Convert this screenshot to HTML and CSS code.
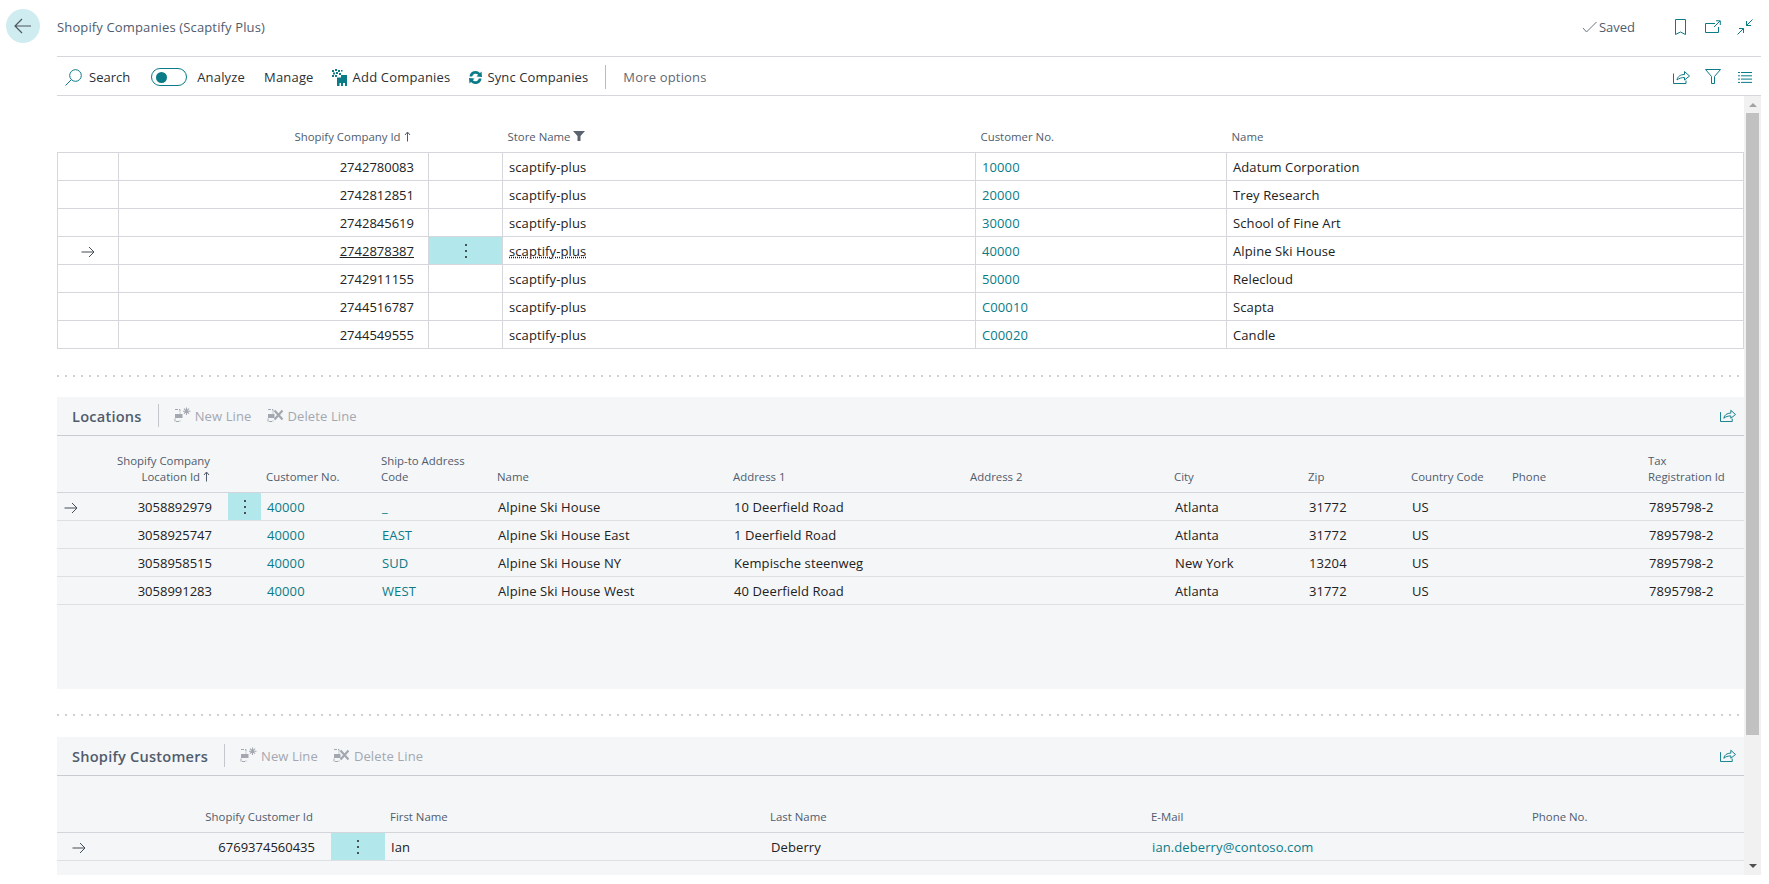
FILE: index.html
```html
<!DOCTYPE html>
<html lang="en">
<head>
<meta charset="utf-8">
<title>Shopify Companies</title>
<link rel="stylesheet" href="styles.css">
</head>
<body>
<svg class="defs" aria-hidden="true">
  <symbol id="arrow" viewBox="0 0 14 12"><path d="M0.5 6H13M8 1l5 5-5 5" fill="none" stroke="#444c56" stroke-width="1"/></symbol>
  <symbol id="up" viewBox="0 0 7 11"><path d="M3.5 10.5V1.5M1 4l2.5-3L6 4" fill="none" stroke="#505c6d" stroke-width="1"/></symbol>
  <symbol id="dots" viewBox="0 0 4 16"><circle cx="2" cy="2" r="1" fill="#212121"/><circle cx="2" cy="8" r="1" fill="#212121"/><circle cx="2" cy="14" r="1" fill="#212121"/></symbol>
  <symbol id="share" viewBox="0 0 17 16"><path d="M.5 5.500v10h12.500v-3M4 12c.5-3.500 3.500-5.500 7.500-5.500V3.500l5 4.500-5 4V9.500c-3 0-5.500.8-7.500 2.500z" fill="none" stroke="#0a7b87" stroke-width="1"/></symbol>
  <symbol id="newline" viewBox="0 0 17 17"><path d="M1 2.500h5v4M1 11.500v3h5v-1" fill="none" stroke="#a3a8b0" stroke-width="1" stroke-dasharray="3 1"/><rect x="1" y="7" width="7.500" height="4" fill="#a3a8b0"/><path d="M12.500 0.500v7.500M9 4.200h7.500M10 1.700l5 5M15 1.700l-5 5" stroke="#a3a8b0" stroke-width="1.100"/></symbol>
  <symbol id="delline" viewBox="0 0 17 17"><path d="M1 2.500h5v4M1 11.500v3h5v-1" fill="none" stroke="#a3a8b0" stroke-width="1" stroke-dasharray="3 1"/><rect x="1" y="7" width="6.500" height="4" fill="#a3a8b0"/><path d="M7.500 3.500l8 9M15.500 3.500l-8 9" stroke="#a3a8b0" stroke-width="2.200"/></symbol>
</svg>
<div class="shell">
  <div class="rail">
    <button class="back" aria-label="Back">
      <svg class="back-ico" viewBox="0 0 18 16"><path d="M1 8h16M8 1 1 8l7 7" fill="none" stroke="#4c5660" stroke-width="1.200"/></svg>
    </button>
  </div>
  <div class="main">
    <header class="head">
      <h1 class="title">Shopify Companies (Scaptify Plus)</h1>
      <div class="head-right">
        <span class="saved"><svg class="check" viewBox="0 0 15 12"><path d="M1 7l3.500 4L14.500 1" fill="none" stroke="#6a7480" stroke-width="1"/></svg>Saved</span>
        <svg class="ico-book" viewBox="0 0 11 16"><path d="M.5.500h10v15l-5-2.500-5 2.500z" fill="none" stroke="#0a7b87" stroke-width="1"/></svg>
        <svg class="ico-open" viewBox="0 0 16 13"><path d="M10 3.500H.5v9h13V7M9 7l6-6M11 .800h4.300V5" fill="none" stroke="#0a7b87" stroke-width="1"/></svg>
        <svg class="ico-coll" viewBox="0 0 16 16"><path d="M15.500.500 9.500 6.500M9.500 2v4.500H14M.5 15.500l6-6M6.500 14V9.500H2" fill="none" stroke="#0a7b87" stroke-width="1"/></svg>
      </div>
    </header>
    <nav class="bar">
      <span class="act act-search">
        <svg class="ico-search" viewBox="0 0 17 17"><circle cx="10.500" cy="6.500" r="5.800" fill="none" stroke="#0a7b87" stroke-width="1"/><path d="M6.300 10.700.5 16.500" stroke="#0a7b87" stroke-width="1"/></svg>Search
      </span>
      <span class="toggle"><span class="knob"></span></span>
      <span class="act act-analyze">Analyze</span>
      <span class="act act-manage">Manage</span>
      <span class="act act-add">
        <svg class="ico-add" viewBox="0 0 15 17"><path d="M0 1h2v2H0zM3 0h2v2H3zM6 1h2v2H6zM1 3.500h2v2H1zM4 3h2v2H4zM7 4h2v2H7zM0 6h2v2H0zM3 6h2v2H3zM9 1h1.500v1.500H9z" fill="#0a7b87"/><path d="M5 8.500h4V6h6v11h-2v-3h-2v3H9v-3H7.500v3H5z" fill="#0a7b87"/></svg>Add Companies
      </span>
      <span class="act act-sync">
        <svg class="ico-sync" viewBox="0 0 15 15"><path d="M1.500 6.500A6 6 0 0 1 12 3l1.500-1.500.5 5.500-5.500-.5 1.700-1.700A3.500 3.500 0 0 0 4.200 6.500zM13.500 8.500A6 6 0 0 1 3 12l-1.500 1.500L1 8l5.500.5-1.700 1.700a3.500 3.500 0 0 0 6-1.700z" fill="#0a7b87"/></svg>Sync Companies
      </span>
      <span class="bar-sep"></span>
      <span class="more">More options</span>
      <span class="bar-right">
        <svg class="ico-share bar-share"><use href="#share"/></svg>
        <svg class="ico-filter" viewBox="0 0 16 15"><path d="M.5.500h15L9.500 7.500v7h-3v-7z" fill="none" stroke="#0a7b87" stroke-width="1"/></svg>
        <svg class="ico-list" viewBox="0 0 14 11"><path d="M0 .5h2M3 .5h11M0 3.800h2M3 3.800h11M0 7.100h2M3 7.100h11M0 10.400h2M3 10.400h11" stroke="#0a7b87" stroke-width="1"/></svg>
      </span>
    </nav>
    <div class="body">
      <div class="scroll">
        <table class="grid boxed t-comp">
          <colgroup><col class="c61"><col class="c310"><col class="c74"><col class="c473"><col class="c251"><col class="c517"></colgroup>
          <thead><tr>
            <th></th><th class="num">Shopify Company Id <svg class="up"><use href="#up"/></svg></th><th></th>
            <th>Store Name <svg class="fun" viewBox="0 0 12 10"><path d="M0 0h12L7.500 5v5h-3V5z" fill="#5a6470"/></svg></th>
            <th>Customer No.</th><th>Name</th>
          </tr></thead>
          <tbody>
            <tr><td></td><td class="num">2742780083</td><td></td><td>scaptify-plus</td><td class="lnk">10000</td><td>Adatum Corporation</td></tr>
            <tr><td></td><td class="num">2742812851</td><td></td><td>scaptify-plus</td><td class="lnk">20000</td><td>Trey Research</td></tr>
            <tr><td></td><td class="num">2742845619</td><td></td><td>scaptify-plus</td><td class="lnk">30000</td><td>School of Fine Art</td></tr>
            <tr><td class="arr arr-comp"><svg class="arrow"><use href="#arrow"/></svg></td><td class="num"><span class="und">2742878387</span></td><td class="menu"><svg class="dots"><use href="#dots"/></svg></td><td><span class="dot-und">scaptify-plus</span></td><td class="lnk">40000</td><td>Alpine Ski House</td></tr>
            <tr><td></td><td class="num">2742911155</td><td></td><td>scaptify-plus</td><td class="lnk">50000</td><td>Relecloud</td></tr>
            <tr><td></td><td class="num">2744516787</td><td></td><td>scaptify-plus</td><td class="lnk">C00010</td><td>Scapta</td></tr>
            <tr><td></td><td class="num">2744549555</td><td></td><td>scaptify-plus</td><td class="lnk">C00020</td><td>Candle</td></tr>
          </tbody>
        </table>
        <div class="dotted"></div>
        <section class="panel panel-loc">
          <div class="pbar">
            <h2 class="ptitle">Locations</h2><span class="psep"></span>
            <span class="pact"><svg class="pico"><use href="#newline"/></svg>New Line</span>
            <span class="pact"><svg class="pico"><use href="#delline"/></svg>Delete Line</span>
            <svg class="ico-share pshare"><use href="#share"/></svg>
          </div>
          <table class="grid t-loc">
            <colgroup><col class="c43"><col class="c128"><col class="c33"><col class="c115"><col class="c116"><col class="c236"><col class="c237"><col class="c204"><col class="c134"><col class="c103"><col class="c101"><col class="c136"><col class="c101"></colgroup>
            <thead><tr>
              <th></th><th class="num num-h">Shopify Company<br>Location Id <svg class="up"><use href="#up"/></svg></th><th></th>
              <th>Customer No.</th><th>Ship-to Address<br>Code</th><th>Name</th><th>Address 1</th><th>Address 2</th><th>City</th><th>Zip</th><th>Country Code</th><th>Phone</th><th>Tax<br>Registration Id</th>
            </tr></thead>
            <tbody>
              <tr><td class="arr arr-loc"><svg class="arrow"><use href="#arrow"/></svg></td><td class="num">3058892979</td><td class="menu"><svg class="dots"><use href="#dots"/></svg></td><td class="lnk">40000</td><td class="lnk">_</td><td>Alpine Ski House</td><td>10 Deerfield Road</td><td></td><td>Atlanta</td><td>31772</td><td>US</td><td></td><td>7895798-2</td></tr>
              <tr><td></td><td class="num">3058925747</td><td></td><td class="lnk">40000</td><td class="lnk">EAST</td><td>Alpine Ski House East</td><td>1 Deerfield Road</td><td></td><td>Atlanta</td><td>31772</td><td>US</td><td></td><td>7895798-2</td></tr>
              <tr><td></td><td class="num">3058958515</td><td></td><td class="lnk">40000</td><td class="lnk">SUD</td><td>Alpine Ski House NY</td><td>Kempische steenweg</td><td></td><td>New York</td><td>13204</td><td>US</td><td></td><td>7895798-2</td></tr>
              <tr><td></td><td class="num">3058991283</td><td></td><td class="lnk">40000</td><td class="lnk">WEST</td><td>Alpine Ski House West</td><td>40 Deerfield Road</td><td></td><td>Atlanta</td><td>31772</td><td>US</td><td></td><td>7895798-2</td></tr>
            </tbody>
          </table>
        </section>
        <div class="dotted dotted-2"></div>
        <section class="panel panel-cust">
          <div class="pbar">
            <h2 class="ptitle">Shopify Customers</h2><span class="psep"></span>
            <span class="pact"><svg class="pico"><use href="#newline"/></svg>New Line</span>
            <span class="pact"><svg class="pico"><use href="#delline"/></svg>Delete Line</span>
            <svg class="ico-share pshare"><use href="#share"/></svg>
          </div>
          <table class="grid t-cust">
            <colgroup><col class="c63"><col class="c211"><col class="c54"><col class="c380"><col class="c381"><col class="c381"><col class="c217"></colgroup>
            <thead><tr><th></th><th class="num num-h">Shopify Customer Id</th><th></th><th>First Name</th><th>Last Name</th><th>E-Mail</th><th>Phone No.</th></tr></thead>
            <tbody>
              <tr><td class="arr arr-cust"><svg class="arrow"><use href="#arrow"/></svg></td><td class="num">6769374560435</td><td class="menu"><svg class="dots"><use href="#dots"/></svg></td><td>Ian</td><td>Deberry</td><td class="lnk">ian.deberry@contoso.com</td><td></td></tr>
            </tbody>
          </table>
        </section>
      </div>
      <div class="sbar">
        <span class="sb-up"></span>
        <span class="sb-thumb"></span>
        <span class="sb-down"></span>
      </div>
    </div>
  </div>
</div>
</body>
</html>
```
FILE: styles.css
```css
* { box-sizing: border-box; }
html, body { margin: 0; height: 884px; overflow: hidden; background: #fff; }
body { font: 13px/16px "Open Sans", "Liberation Sans", sans-serif; color: #212121; }
.defs { width: 0; height: 0; position: absolute; }
svg { display: inline-block; flex: none; }

.shell { display: flex; height: 875px; }
.rail { width: 57px; padding: 9px 0 0 6px; }
.back { width: 34px; height: 34px; border: 0; padding: 0; border-radius: 50%; background: #cfedf0; display: flex; align-items: center; justify-content: center; }
.back-ico { width: 18px; height: 16px; }
.main { width: 1704px; display: flex; flex-direction: column; }

.head { height: 57px; border-bottom: 1px solid #d6d7da; display: flex; align-items: center; justify-content: space-between; padding-bottom: 3px; }
.title { margin: 0; font-size: 13px; font-weight: 400; color: #505c6d; letter-spacing: .14px; }
.head-right { display: flex; align-items: center; padding-right: 8px; }
.saved { display: flex; align-items: center; color: #505c6d; gap: 2px; margin-right: 40px; }
.check { width: 15px; height: 12px; }
.ico-book { width: 11px; height: 16px; margin-right: 19px; }
.ico-open { width: 16px; height: 13px; margin-right: 16px; }
.ico-coll { width: 16px; height: 16px; }

.bar { height: 39px; border-bottom: 1px solid #d6d7da; display: flex; align-items: center; color: #2b2f36; padding: 2px 0 0 8px; letter-spacing: .18px; }
.act { display: flex; align-items: center; white-space: nowrap; }
.act-search { gap: 7px; margin-right: 21px; letter-spacing: 0; }
.ico-search { width: 17px; height: 17px; }
.toggle { width: 36px; height: 18px; border: 1px solid #0a7b87; border-radius: 9px; display: flex; align-items: center; padding-left: 4px; margin-right: 10px; }
.knob { width: 11px; height: 11px; border-radius: 50%; background: #0a7b87; }
.act-analyze { margin-right: 19px; }
.act-manage { margin-right: 18px; }
.act-add { gap: 6px; margin-right: 18px; }
.ico-add { width: 15px; height: 17px; }
.act-sync { gap: 4px; letter-spacing: .12px; }
.ico-sync { width: 15px; height: 15px; }
.bar-sep { width: 1px; height: 24px; background: #b8bcc2; margin: 0 17px; }
.more { color: #5f6873; }
.bar-right { margin-left: auto; display: flex; align-items: center; padding-right: 9px; }
.ico-share { width: 17px; height: 16px; }
.bar-share { margin-bottom: 3px; }
.ico-filter { width: 16px; height: 15px; margin: 0 17px 2px 15px; }
.ico-list { width: 14px; height: 11px; }

.body { display: flex; height: 779px; }
.scroll { width: 1687px; }
.sbar { width: 17px; background: #f1f1f1; display: flex; flex-direction: column; align-items: center; }
.sb-up { width: 0; height: 0; border: 4px solid transparent; border-top: 0; border-bottom: 4px solid #a3a3a3; margin: 7px 0 6px; }
.sb-thumb { width: 13px; height: 622px; background: #c1c1c1; }
.sb-down { width: 0; height: 0; border: 4px solid transparent; border-bottom: 0; border-top: 4px solid #505050; margin-top: auto; margin-bottom: 7px; }

.grid { border-collapse: collapse; table-layout: fixed; width: 1687px; }
.grid th { font-weight: 400; font-size: 11.4px; color: #505c6d; text-align: left; vertical-align: bottom; padding: 0 6px 7px 5px; white-space: nowrap; }
.grid td { height: 28px; padding: 0 6px; white-space: nowrap; letter-spacing: .1px; }
.grid th.num, .grid td.num { text-align: right; padding-right: 16px; letter-spacing: 0; }
.grid th.num-h { padding-right: 18px; }
.t-comp th.num { padding-right: 18px; }
.t-comp td.num { padding-right: 14px; }
.lnk { color: #0a7b87; }
.und { text-decoration: underline; }
.dot-und { text-decoration: underline dotted; }
.grid td.menu { background: #b2e8ec; text-align: center; padding: 0; }
.dots { width: 4px; height: 16px; vertical-align: middle; }
.arrow { width: 14px; height: 12px; vertical-align: middle; }
.up { width: 7px; height: 11px; vertical-align: -1px; }
.fun { width: 12px; height: 10px; vertical-align: 0; }
.grid td.arr-comp { padding-left: 23px; }
.grid td.arr-loc { padding-left: 7px; }
.grid td.arr-cust { padding-left: 15px; }

.c33 { width: 33px; } .c43 { width: 43px; } .c54 { width: 54px; } .c61 { width: 61px; } .c63 { width: 63px; }
.c74 { width: 74px; } .c101 { width: 101px; } .c103 { width: 103px; } .c115 { width: 115px; }
.c116 { width: 116px; } .c128 { width: 128px; } .c134 { width: 134px; } .c136 { width: 136px; } .c204 { width: 204px; }
.c211 { width: 211px; } .c217 { width: 217px; } .c236 { width: 236px; } .c237 { width: 237px; } .c251 { width: 251px; }
.c310 { width: 310px; } .c380 { width: 380px; } .c381 { width: 381px; } .c473 { width: 473px; } .c517 { width: 517px; }

.boxed { width: 1686px; }
.t-comp thead tr { height: 56px; }
.t-comp tbody td { border: 1px solid #d6d7dc; padding-top: 1px; }

.dotted { height: 2px; margin: 26px 5px 20px 0; background: repeating-linear-gradient(90deg, #cfd0d4 0 2px, transparent 2px 8px); }
.dotted-2 { margin-top: 25px; margin-bottom: 21px; }

.panel { background: #f5f6f8; }
.panel-loc { height: 292px; }
.panel-cust { height: 138px; }
.pbar { height: 39px; border-bottom: 1px solid #c9cbd0; display: flex; align-items: center; padding: 0 8px 0 15px; color: #a3a8b0; }
.ptitle { margin: 0; font-size: 14.6px; line-height: 20px; font-weight: 600; color: #505c6d; letter-spacing: .22px; }
.psep { width: 1px; height: 23px; background: #c4c7cc; margin: 0 15px 0 16px; }
.pact { display: flex; align-items: center; gap: 4px; margin-right: 15px; letter-spacing: .12px; }
.pico { width: 17px; height: 17px; }
.pshare { margin: 0 0 2px auto; width: 16px; height: 15px; }
.t-loc thead tr { height: 57px; }
.t-cust thead tr { height: 57px; }
.t-loc th, .t-cust th { border-bottom: 1px solid #d3d5da; }
.t-loc td, .t-cust td { border-bottom: 1px solid #dfe0e4; }
```
